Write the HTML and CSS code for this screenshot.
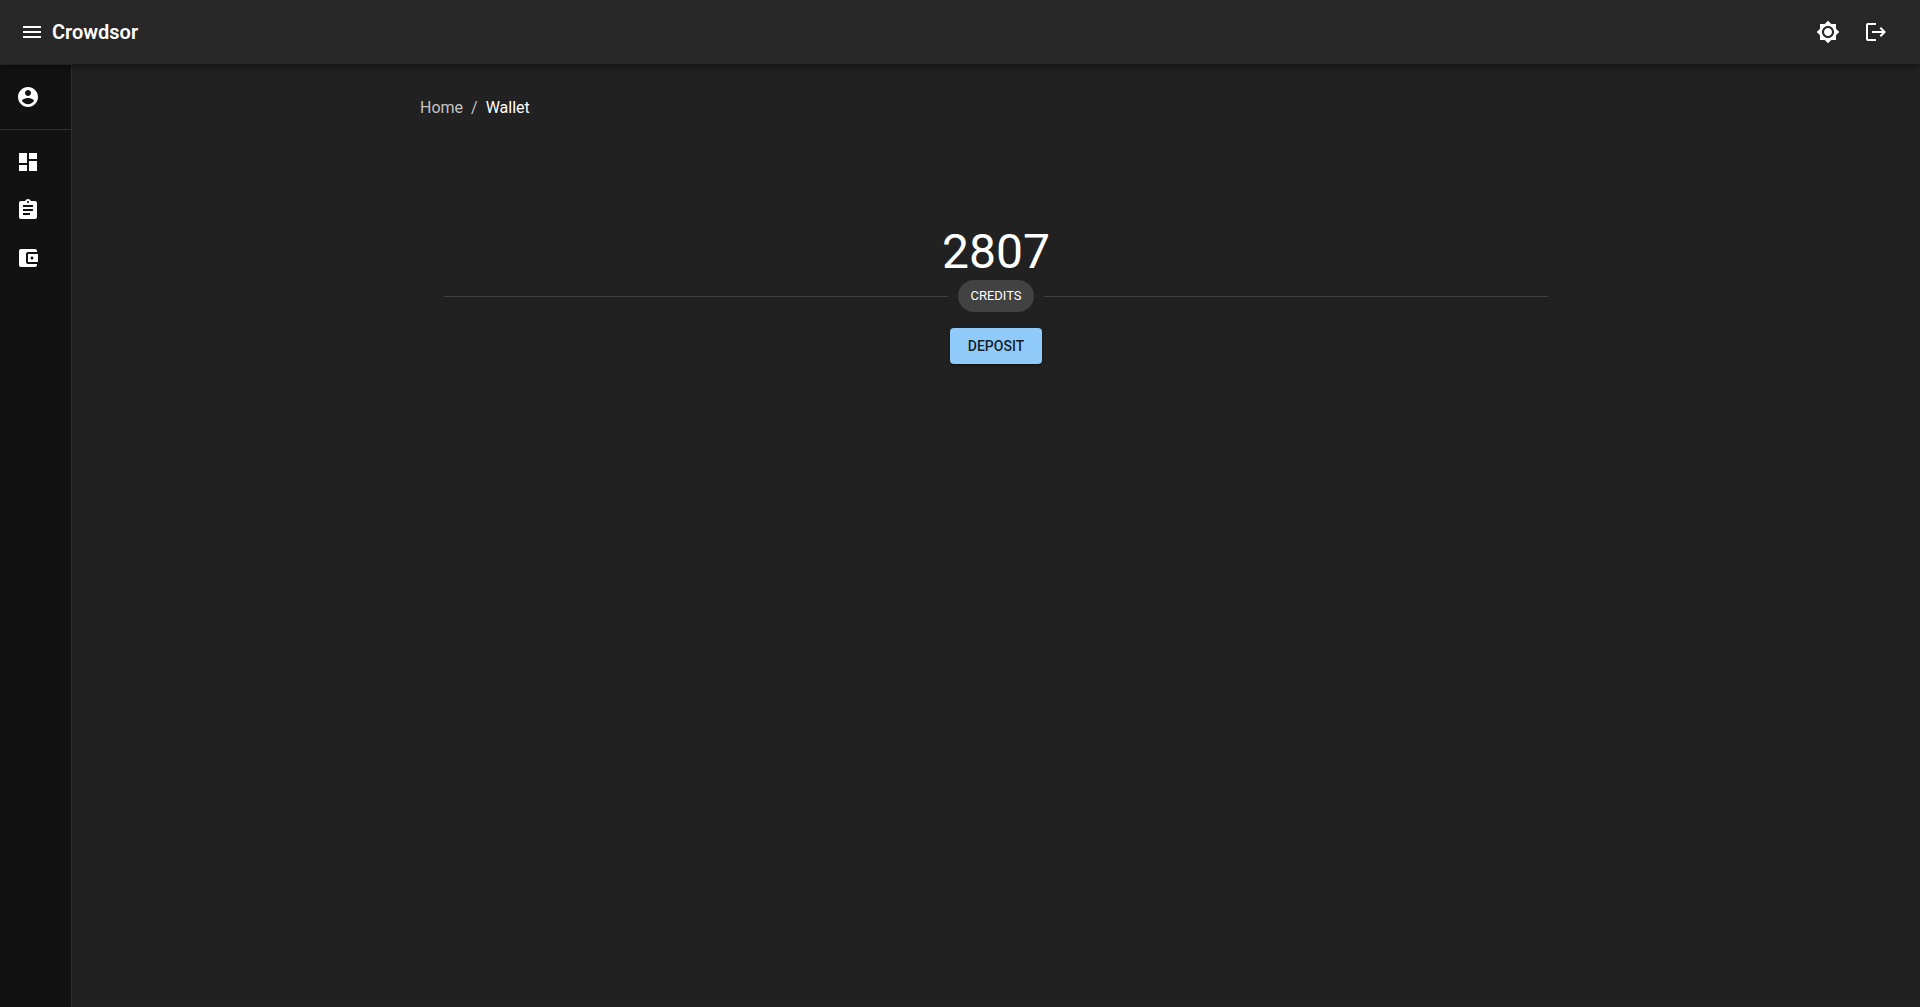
FILE: index.html
```html
<!DOCTYPE html>
<html lang="en">
<head>
<meta charset="utf-8">
<meta name="viewport" content="width=device-width, initial-scale=1">
<title>Wallet - Crowdsor</title>
<link rel="stylesheet" href="styles.css">
</head>
<body>
<header class="topbar">
  <button class="icon-button menu-button" type="button" aria-label="Toggle menu">
    <svg class="icon" viewBox="0 0 24 24"><path d="M3 18h18v-2H3v2zm0-5h18v-2H3v2zm0-7v2h18V6H3z"/></svg>
  </button>
  <h1 class="brand">Crowdsor</h1>
  <div class="actions">
    <button class="icon-button action" type="button" aria-label="Toggle theme">
      <svg class="icon" viewBox="0 0 24 24"><path d="M20 8.69V4h-4.69L12 .69 8.69 4H4v4.69L.69 12 4 15.31V20h4.69L12 23.31 15.31 20H20v-4.69L23.31 12 20 8.69zM12 18c-3.31 0-6-2.69-6-6s2.69-6 6-6 6 2.69 6 6-2.69 6-6 6zm0-10c-2.21 0-4 1.79-4 4s1.79 4 4 4 4-1.79 4-4-1.79-4-4-4z"/></svg>
    </button>
    <button class="icon-button action" type="button" aria-label="Log out">
      <svg class="icon" viewBox="0 0 24 24"><path d="M17 7l-1.41 1.41L18.17 11H8v2h10.17l-2.58 2.58L17 17l5-5zM4 5h8V3H4c-1.1 0-2 .9-2 2v14c0 1.1.9 2 2 2h8v-2H4V5z"/></svg>
    </button>
  </div>
</header>
<div class="layout">
  <nav class="sidebar" aria-label="Main">
    <div class="nav-group">
      <a class="nav-item" href="#profile" aria-label="Profile">
        <svg class="icon" viewBox="0 0 24 24"><path d="M12 2C6.48 2 2 6.48 2 12s4.48 10 10 10 10-4.48 10-10S17.52 2 12 2zm0 3c1.66 0 3 1.34 3 3s-1.34 3-3 3-3-1.34-3-3 1.34-3 3-3zm0 14.2c-2.5 0-4.71-1.28-6-3.22.03-1.99 4-3.08 6-3.08 1.99 0 5.97 1.09 6 3.08-1.29 1.94-3.5 3.22-6 3.22z"/></svg>
      </a>
    </div>
    <div class="nav-group">
      <a class="nav-item" href="#dashboard" aria-label="Dashboard">
        <svg class="icon" viewBox="0 0 24 24"><path d="M3 13h8V3H3v10zm0 8h8v-6H3v6zm10 0h8V11h-8v10zm0-18v6h8V3h-8z"/></svg>
      </a>
      <a class="nav-item" href="#tasks" aria-label="Tasks">
        <svg class="icon" viewBox="0 0 24 24"><path d="M19 3h-4.18C14.4 1.84 13.3 1 12 1c-1.3 0-2.4.84-2.82 2H5c-1.1 0-2 .9-2 2v14c0 1.1.9 2 2 2h14c1.1 0 2-.9 2-2V5c0-1.1-.9-2-2-2zm-7 0c.55 0 1 .45 1 1s-.45 1-1 1-1-.45-1-1 .45-1 1-1zm2 14H7v-2h7v2zm3-4H7v-2h10v2zm0-4H7V7h10v2z"/></svg>
      </a>
      <a class="nav-item" href="#wallet" aria-label="Wallet">
        <svg class="icon" viewBox="0 0 24 24"><path d="M21 18v1c0 1.1-.9 2-2 2H5c-1.11 0-2-.9-2-2V5c0-1.1.89-2 2-2h14c1.1 0 2 .9 2 2v1h-9c-1.11 0-2 .9-2 2v8c0 1.1.89 2 2 2h9zm-9-2h10V8H12v8zm4-2.5c-.83 0-1.5-.67-1.5-1.5s.67-1.5 1.5-1.5 1.5.67 1.5 1.5-.67 1.5-1.5 1.5z"/></svg>
      </a>
    </div>
  </nav>
  <main class="content">
    <div class="container">
      <nav class="breadcrumbs" aria-label="Breadcrumb">
        <a class="crumb" href="#home">Home</a>
        <span class="separator">/</span>
        <span class="current" aria-current="page">Wallet</span>
      </nav>
      <section class="wallet">
        <p class="balance">2807</p>
        <div class="divider"><span class="chip">CREDITS</span></div>
        <button class="deposit" type="button">DEPOSIT</button>
      </section>
    </div>
  </main>
</div>
</body>
</html>
```
FILE: styles.css
```css
* {
  box-sizing: border-box;
}

body {
  margin: 0;
  min-height: 100vh;
  display: flex;
  flex-direction: column;
  background: #212121;
  color: #fff;
  font-family: Roboto, "Liberation Sans", sans-serif;
  font-size: 16px;
  line-height: 24px;
}

.icon {
  display: block;
  width: 24px;
  height: 24px;
  fill: currentColor;
}

.topbar {
  position: relative;
  z-index: 1;
  display: flex;
  align-items: center;
  height: 64px;
  padding: 0 20px;
  background: #272727;
  box-shadow: 0 2px 4px -1px rgba(0, 0, 0, 0.2), 0 4px 5px rgba(0, 0, 0, 0.14), 0 1px 10px rgba(0, 0, 0, 0.12);
}

.icon-button {
  padding: 0;
  border: 0;
  background: none;
  color: inherit;
  cursor: pointer;
}

.brand {
  margin: 0 0 0 8px;
  font-size: 20px;
  font-weight: 600;
  line-height: 32px;
}

.actions {
  display: flex;
  margin-left: auto;
}

.action {
  padding: 12px;
}

.layout {
  flex: 1;
  display: flex;
}

.sidebar {
  flex: none;
  width: 72px;
  border-right: 1px solid #2e2e2e;
  background: #121212;
}

.nav-group {
  padding: 8px 0;
  border-top: 1px solid #2e2e2e;
}

.nav-item {
  display: flex;
  align-items: center;
  height: 48px;
  padding: 0 16px;
  color: #fff;
}

.content {
  flex: 1;
  min-width: 0;
}

.container {
  max-width: 1200px;
  margin: 0 auto;
  padding: 32px 24px;
}

.breadcrumbs {
  display: flex;
  gap: 8px;
  color: #c4c4c4;
}

.crumb {
  color: inherit;
  text-decoration: none;
}

.current {
  color: #fff;
}

.wallet {
  display: flex;
  flex-direction: column;
  align-items: center;
  margin-top: 104px;
  padding: 0 24px;
}

.balance {
  margin: 0;
  font-size: 48px;
  line-height: 56px;
}

.divider {
  display: flex;
  align-items: center;
  gap: 10px;
  width: 100%;
}

.divider::before,
.divider::after {
  content: "";
  flex: 1;
  border-top: 1px solid #424242;
}

.chip {
  padding: 0 12px;
  border-radius: 16px;
  background: #424242;
  font-size: 13px;
  line-height: 32px;
}

.deposit {
  margin-top: 16px;
  padding: 6px 18px;
  border: 0;
  border-radius: 4px;
  background: #90caf9;
  box-shadow: 0 3px 1px -2px rgba(0, 0, 0, 0.2), 0 2px 2px rgba(0, 0, 0, 0.14), 0 1px 5px rgba(0, 0, 0, 0.12);
  color: rgba(0, 0, 0, 0.87);
  font-family: inherit;
  font-size: 14px;
  font-weight: 500;
  line-height: 24px;
  cursor: pointer;
}
```
